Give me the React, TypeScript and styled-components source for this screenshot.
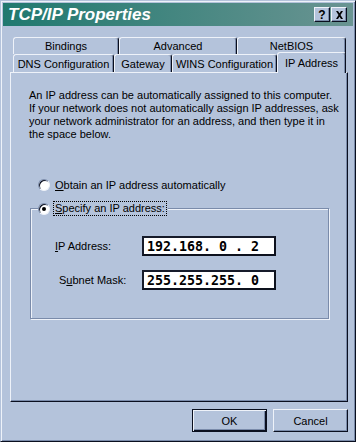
import styled, { createGlobalStyle } from "styled-components";

const COLORS = {
  face: "#b4c3db",
  light: "#eef2f9",
  shadow: "#7a8baa",
  dark: "#0a0f1f",
  titleFrom: "#20796f",
  titleTo: "#6a9492",
  field: "#ffffff",
};

const BACK_TABS = [
  { label: "Bindings", width: 106 },
  { label: "Advanced", width: 118 },
  { label: "NetBIOS", width: 109 },
];

const FRONT_TABS = [
  { label: "DNS Configuration", width: 101 },
  { label: "Gateway", width: 58 },
  { label: "WINS Configuration", width: 105 },
  { label: "IP Address", width: 69, selected: true },
];

const GlobalStyle = createGlobalStyle`
  html, body {
    margin: 0;
    padding: 0;
    background: ${COLORS.face};
  }
  body {
    font-family: "Liberation Sans", Arial, sans-serif;
    font-size: 11px;
    color: #000;
  }
`;

const IpAddress = ({ octets }: { octets: string[] }) => (
  <IpField>
    {octets.map((octet, index) => (
      <IpPart key={index}>
        <Octet>{octet}</Octet>
        {index < octets.length - 1 && <Dot>.</Dot>}
      </IpPart>
    ))}
  </IpField>
);

export default function App() {
  return (
    <>
      <GlobalStyle />
      <Window>
        <TitleBar>
          <Title>TCP/IP Properties</Title>
          <CaptionButtons>
            <CaptionButton aria-label="Help">
              <HelpGlyph>?</HelpGlyph>
            </CaptionButton>
            <CaptionButton aria-label="Close">
              <svg width="9" height="8" viewBox="0 0 9 8">
                <path d="M1 0h2l1.5 2.2L6 0h2L5.5 4 8 8H6L4.5 5.8 3 8H1l2.5-4z" fill="#000" />
              </svg>
            </CaptionButton>
          </CaptionButtons>
        </TitleBar>

        <Body>
          <TabStrip>
            <TabRow>
              {BACK_TABS.map((tab) => (
                <Tab key={tab.label} $width={tab.width}>
                  {tab.label}
                </Tab>
              ))}
            </TabRow>
            <TabRow $front>
              {FRONT_TABS.map((tab) => (
                <Tab key={tab.label} $width={tab.width} $selected={tab.selected}>
                  {tab.label}
                </Tab>
              ))}
            </TabRow>
          </TabStrip>

          <Panel>
            <Intro>
              An IP address can be automatically assigned to this computer.
              <br />
              If your network does not automatically assign IP addresses, ask
              <br />
              your network administrator for an address, and then type it in
              <br />
              the space below.
            </Intro>

            <Choice>
              <Radio />
              <span>
                <u>O</u>btain an IP address automatically
              </span>
            </Choice>

            <GroupBox>
              <Legend>
                <Radio $checked />
                <FocusLabel>
                  <u>S</u>pecify an IP address:
                </FocusLabel>
              </Legend>
              <FieldGrid>
                <FieldLabel>
                  <u>I</u>P Address:
                </FieldLabel>
                <IpAddress octets={["192", "168", "0", "2"]} />
                <FieldLabel $indent={4}>
                  S<u>u</u>bnet Mask:
                </FieldLabel>
                <IpAddress octets={["255", "255", "255", "0"]} />
              </FieldGrid>
            </GroupBox>
          </Panel>

          <Footer>
            <Button $default>OK</Button>
            <Button>Cancel</Button>
          </Footer>
        </Body>
      </Window>
    </>
  );
}

const Window = styled.div`
  box-sizing: border-box;
  width: 356px;
  height: 442px;
  display: flex;
  flex-direction: column;
  padding: 2px;
  background: ${COLORS.face};
  border: 1px solid;
  border-color: ${COLORS.face} ${COLORS.dark} ${COLORS.dark} ${COLORS.face};
  box-shadow: inset 1px 1px 0 ${COLORS.light}, inset -1px -1px 0 ${COLORS.shadow};
`;

const TitleBar = styled.div`
  height: 23px;
  flex: none;
  display: flex;
  align-items: center;
  justify-content: space-between;
  padding: 0 6px 0 5px;
  background: linear-gradient(to right, ${COLORS.titleFrom}, ${COLORS.titleTo});
`;

const Title = styled.span`
  color: #fff;
  font-size: 17px;
  font-weight: bold;
  font-style: italic;
`;

const CaptionButtons = styled.div`
  display: flex;
  gap: 1px;
`;

const CaptionButton = styled.div`
  box-sizing: border-box;
  width: 16px;
  height: 15px;
  display: flex;
  align-items: center;
  justify-content: center;
  background: ${COLORS.face};
  border: 1px solid;
  border-color: ${COLORS.light} ${COLORS.dark} ${COLORS.dark} ${COLORS.light};
  box-shadow: inset -1px -1px 0 ${COLORS.shadow};
`;

const HelpGlyph = styled.span`
  font-size: 12px;
  font-weight: bold;
  line-height: 1;
`;

const Body = styled.div`
  flex: 1;
  display: flex;
  flex-direction: column;
  padding: 0 5px 0 7px;
`;

const TabStrip = styled.div`
  margin-top: 11px;
  display: flex;
  flex-direction: column;
`;

const TabRow = styled.div<{ $front?: boolean }>`
  display: flex;
  align-items: flex-end;
  height: ${(p) => (p.$front ? 18 : 17)}px;
  padding-left: 3px;
`;

const Tab = styled.div<{ $width: number; $selected?: boolean }>`
  box-sizing: border-box;
  width: ${(p) => p.$width}px;
  height: ${(p) => (p.$selected ? "21px" : "100%")};
  margin-bottom: ${(p) => (p.$selected ? -1 : 0)}px;
  position: ${(p) => (p.$selected ? "relative" : "static")};
  z-index: ${(p) => (p.$selected ? 1 : "auto")};
  display: flex;
  align-items: center;
  justify-content: center;
  padding-bottom: ${(p) => (p.$selected ? 1 : 0)}px;
  background: ${COLORS.face};
  border: 1px solid;
  border-bottom: none;
  border-color: ${COLORS.light} ${COLORS.dark} transparent ${COLORS.light};
  border-radius: 3px 3px 0 0;
  box-shadow: inset -1px 0 0 ${COLORS.shadow};
  white-space: nowrap;
`;

const Panel = styled.div`
  box-sizing: border-box;
  height: 330px;
  padding: 16px 17px 0 18px;
  border: 1px solid;
  border-color: ${COLORS.light} ${COLORS.dark} ${COLORS.dark} ${COLORS.light};
  box-shadow: inset -1px -1px 0 ${COLORS.shadow};
`;

const Intro = styled.p`
  margin: 0;
  line-height: 13px;
  white-space: nowrap;
`;

const Choice = styled.div`
  display: flex;
  align-items: center;
  gap: 5px;
  height: 13px;
  margin: 37px 0 0 9px;
`;

const Radio = styled.span<{ $checked?: boolean }>`
  box-sizing: border-box;
  flex: none;
  width: 12px;
  height: 12px;
  display: inline-flex;
  align-items: center;
  justify-content: center;
  border-radius: 50%;
  background: ${COLORS.field};
  border: 1px solid;
  border-color: ${COLORS.shadow} ${COLORS.light} ${COLORS.light} ${COLORS.shadow};
  box-shadow: inset 1px 1px 0 ${COLORS.dark};

  &::after {
    content: "";
    display: ${(p) => (p.$checked ? "block" : "none")};
    width: 4px;
    height: 4px;
    border-radius: 50%;
    background: #000;
  }
`;

const GroupBox = styled.fieldset`
  box-sizing: border-box;
  width: 299px;
  min-width: 0;
  margin: 11px 0 0 1px;
  padding: 0 0 28px 7px;
  border: 1px solid ${COLORS.shadow};
  box-shadow: inset 1px 1px 0 ${COLORS.light}, 1px 1px 0 ${COLORS.light};
`;

const Legend = styled.legend`
  display: flex;
  align-items: center;
  gap: 4px;
  padding: 0 2px 0 0;
  background: ${COLORS.face};
`;

const FocusLabel = styled.span`
  padding: 0 1px;
  line-height: 13px;
  outline: 1px dotted #000;
`;

const FieldGrid = styled.div`
  display: grid;
  grid-template-columns: 87px 134px;
  row-gap: 14px;
  margin: 21px 0 0 17px;
`;

const FieldLabel = styled.span<{ $indent?: number }>`
  align-self: center;
  padding-left: ${(p) => p.$indent ?? 0}px;
`;

const IpField = styled.div`
  box-sizing: border-box;
  height: 20px;
  display: flex;
  align-items: center;
  padding-left: 3px;
  background: ${COLORS.field};
  border: 2px solid;
  border-color: #161b2a #0d111d #0d111d #161b2a;
  font-family: "DejaVu Sans Mono", "Liberation Mono", monospace;
  font-size: 13.3px;
  font-weight: bold;
`;

const IpPart = styled.span`
  display: flex;
`;

const Octet = styled.span`
  width: 24px;
  text-align: center;
`;

const Dot = styled.span`
  width: 8px;
  text-align: center;
`;

const Footer = styled.div`
  display: flex;
  justify-content: flex-end;
  gap: 6px;
  margin-top: 7px;
`;

const Button = styled.button<{ $default?: boolean }>`
  box-sizing: border-box;
  width: 75px;
  height: 23px;
  padding: 0;
  font-family: "Liberation Sans", Arial, sans-serif;
  font-size: 11px;
  color: #000;
  background: ${COLORS.face};
  border: 1px solid;
  border-color: ${(p) =>
    p.$default
      ? COLORS.dark
      : `${COLORS.light} ${COLORS.dark} ${COLORS.dark} ${COLORS.light}`};
  box-shadow: ${(p) =>
    p.$default
      ? `inset 1px 1px 0 ${COLORS.light}, inset -1px -1px 0 ${COLORS.dark}, inset -2px -2px 0 ${COLORS.shadow}`
      : `inset -1px -1px 0 ${COLORS.shadow}`};
`;
